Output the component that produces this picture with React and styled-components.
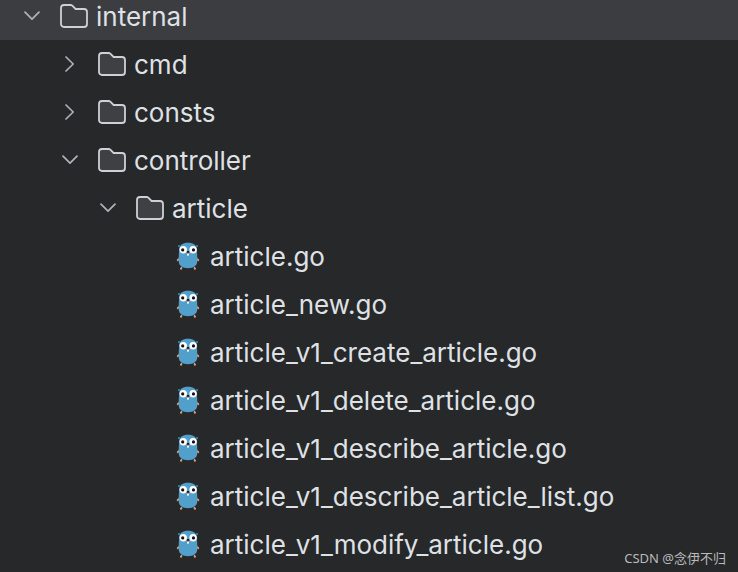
import { useState } from 'react';
import styled, { createGlobalStyle } from 'styled-components';

const tree = [
  { id: 'internal', name: 'internal', level: 0, type: 'folder', open: true },
  { id: 'cmd', name: 'cmd', level: 1, type: 'folder' },
  { id: 'consts', name: 'consts', level: 1, type: 'folder' },
  { id: 'controller', name: 'controller', level: 1, type: 'folder', open: true },
  { id: 'article', name: 'article', level: 2, type: 'folder', open: true },
  { id: 'article.go', name: 'article.go', level: 3, type: 'go' },
  { id: 'new', name: 'article_new.go', level: 3, type: 'go' },
  { id: 'create', name: 'article_v1_create_article.go', level: 3, type: 'go' },
  { id: 'delete', name: 'article_v1_delete_article.go', level: 3, type: 'go' },
  { id: 'describe', name: 'article_v1_describe_article.go', level: 3, type: 'go' },
  { id: 'list', name: 'article_v1_describe_article_list.go', level: 3, type: 'go' },
  { id: 'modify', name: 'article_v1_modify_article.go', level: 3, type: 'go' },
];

const Chevron = ({ open }) => (
  <svg width="16" height="18" viewBox="0 0 16 18" fill="none" stroke="#b0b2b8" strokeWidth="1.7" strokeLinecap="round" strokeLinejoin="round">
    <path d={open ? 'M1 5.2L8 12.2L15 5.2' : 'M4 2L11.2 9L4 16'} />
  </svg>
);

const Folder = () => (
  <svg width="28" height="24" viewBox="0 0 28 24">
    <path
      d="M1 4a3 3 0 0 1 3-3h6.6a2.4 2.4 0 0 1 1.7.7L15.6 5H24a3 3 0 0 1 3 3v12a3 3 0 0 1-3 3H4a3 3 0 0 1-3-3z"
      fill="#3f4044"
      stroke="#ced0d6"
      strokeWidth="1.8"
    />
  </svg>
);

const Gopher = () => (
  <svg width="28" height="32" viewBox="0 0 28 32">
    {/* ears */}
    <circle cx="5" cy="6" r="1.1" fill="#3f87ab" />
    <circle cx="23" cy="6" r="1.1" fill="#3f87ab" />
    {/* hands and feet */}
    <g stroke="#d39a7c" strokeWidth="2" strokeLinecap="round">
      <path d="M4.6 19.2L3.8 20.2M23.4 19.2L24.2 20.2M7.4 28L7 28.8M20.6 28L21 28.8" />
    </g>
    <path
      d="M14 2.8C19.6 2.8 22.6 5.2 22.9 9.6C23 13 23.5 18 23.3 21.6C22.9 26.2 19.4 28.2 14 28.2C8.6 28.2 5.1 26.2 4.7 21.6C4.5 18 5 13 5.1 9.6C5.4 5.2 8.4 2.8 14 2.8Z"
      fill="#529fcb"
    />
    <circle cx="9.3" cy="9.7" r="3.7" fill="#fff" />
    <circle cx="19.1" cy="9.7" r="3.7" fill="#fff" />
    <circle cx="8.7" cy="9.9" r="1.6" fill="#111" />
    <circle cx="19.5" cy="9.9" r="1.6" fill="#111" />
    <rect x="13.1" y="13.5" width="1.8" height="2.1" fill="#fff" />
    <ellipse cx="14" cy="13" rx="2" ry="1" fill="#c99579" />
    <ellipse cx="14" cy="11.9" rx="1.3" ry="0.9" fill="#111" />
  </svg>
);

const App = () => {
  const [selected, setSelected] = useState('internal');

  return (
    <>
      <GlobalStyle />
      <PanelStyled>
        <TreeStyled>
          {tree.map((item) => (
            <RowStyled
              key={item.id}
              $level={item.level}
              $selected={selected === item.id}
              onClick={() => setSelected(item.id)}
            >
              {item.type === 'folder' ? (
                <ToggleButton aria-label={`Toggle ${item.name}`} aria-expanded={!!item.open}>
                  <Chevron open={item.open} />
                </ToggleButton>
              ) : (
                <ToggleSpace />
              )}
              <NameButton>
                {item.type === 'folder' ? <Folder /> : <Gopher />}
                <NameText>{item.name}</NameText>
              </NameButton>
            </RowStyled>
          ))}
        </TreeStyled>
        <Watermark>CSDN @念伊不归</Watermark>
      </PanelStyled>
    </>
  );
};

const GlobalStyle = createGlobalStyle`
  body {
    margin: 0;
    background: #27282a;
  }
`;

const PanelStyled = styled.main`
  position: relative;
  min-height: 100vh;
  overflow: hidden;
  background: #27282a;
`;

/* scrolled down a little, so the first row is cut at the top */
const TreeStyled = styled.ul`
  list-style: none;
  margin: -8px 0 0;
  padding: 0;
`;

const RowStyled = styled.li`
  display: flex;
  align-items: center;
  gap: 20px;
  height: 48px;
  padding-left: ${({ $level }) => 24 + $level * 38}px;
  background: ${({ $selected }) => ($selected ? '#3c3d41' : 'transparent')};
`;

const ToggleButton = styled.button`
  display: flex;
  flex: none;
  width: 16px;
  padding: 0;
  border: none;
  background: none;
`;

const ToggleSpace = styled.span`
  flex: none;
  width: 16px;
`;

const NameButton = styled.button`
  display: flex;
  align-items: center;
  gap: 8px;
  padding: 0;
  border: none;
  background: none;
  color: #dfe1e5;
  font-family: Inter, 'Liberation Sans', sans-serif;
  font-size: 26px;
  font-weight: 410;
  line-height: 32px;
  white-space: nowrap;

  svg {
    flex: none;
  }
`;

const NameText = styled.span`
  padding-top: 2px;
`;

const Watermark = styled.div`
  position: absolute;
  right: 12px;
  bottom: 4px;
  color: #b9babb;
  font-family: 'Noto Sans', 'Noto Sans CJK SC', sans-serif;
  font-size: 13px;
  line-height: 20px;
`;

export default App;
